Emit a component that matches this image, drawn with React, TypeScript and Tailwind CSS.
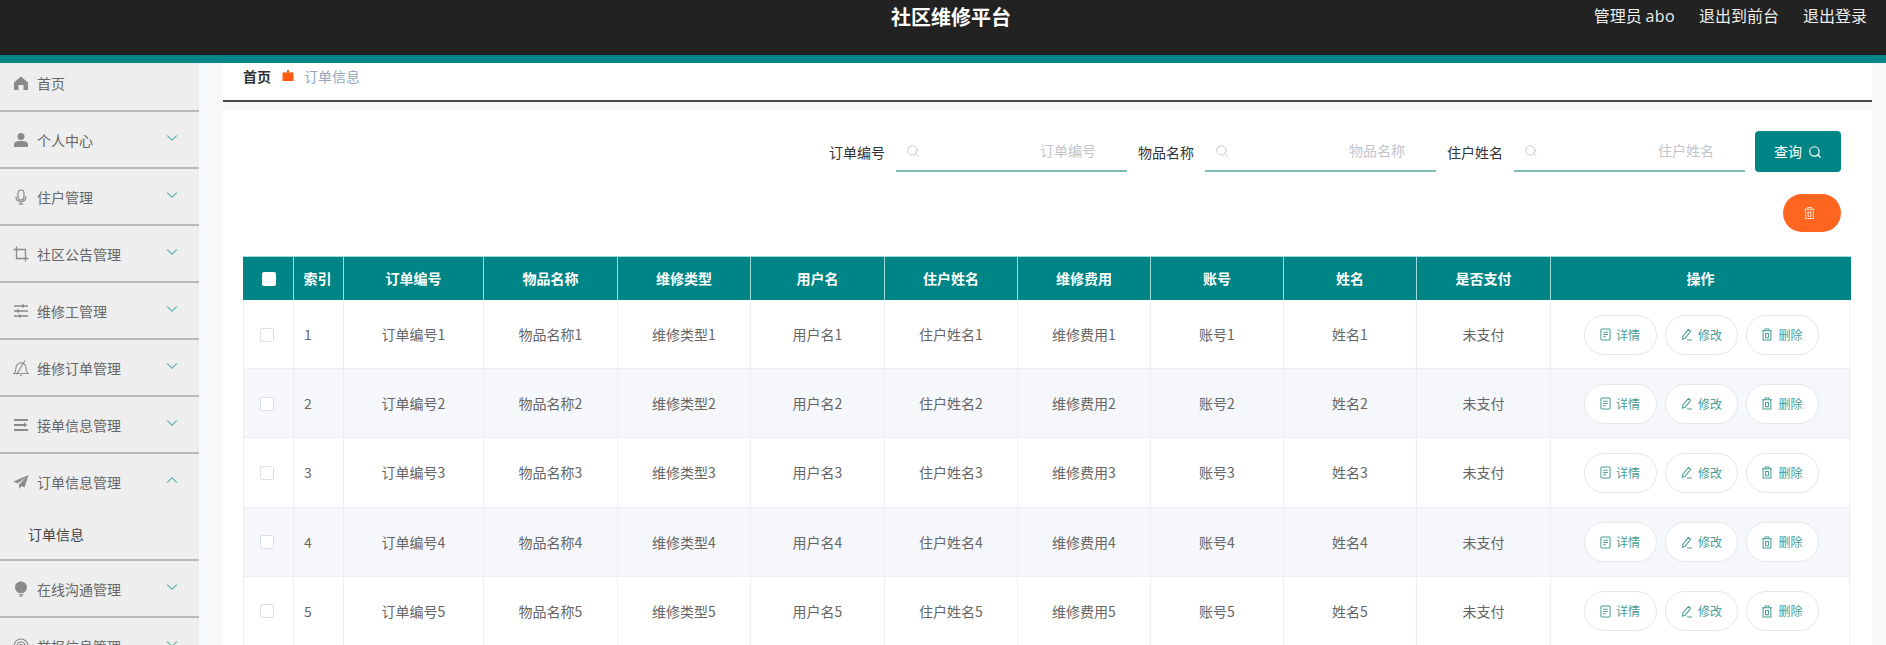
import { ChevronDown, ChevronUp, Search } from "lucide-react";

const FONT = "font-['Noto_Sans_CJK_SC','Liberation_Sans',sans-serif]";

function MenuIcon({ name }: { name: string }) {
  const c = "h-[16px] w-[16px] shrink-0 text-[#8a8a8a]";
  if (name === "home")
    return (
      <svg viewBox="0 0 16 16" className={c} fill="currentColor">
        <path d="M8 1.500 1 7.500v7.500h4.500v-5h5v5H15V7.500z" />
      </svg>
    );
  if (name === "user")
    return (
      <svg viewBox="0 0 16 16" className={c} fill="currentColor">
        <circle cx="8" cy="4.500" r="3.500" />
        <path d="M1 15v-2.500C1 10 3.500 9 8 9s7 1 7 3.500V15z" />
      </svg>
    );
  if (name === "mic")
    return (
      <svg viewBox="0 0 16 16" className={c} fill="none" stroke="currentColor" strokeWidth="1.200">
        <rect x="5" y="1" width="6" height="10" rx="3" />
        <path d="M3 7.500c0 3.200 2 5 5 5s5-1.800 5-5M8 12.500V15M5.500 15h5" />
      </svg>
    );
  if (name === "crop")
    return (
      <svg viewBox="0 0 16 16" className={c} fill="none" stroke="currentColor" strokeWidth="1.300">
        <path d="M3.500 0.500v12h12M0.500 3.500h12v12" />
      </svg>
    );
  if (name === "sliders")
    return (
      <svg viewBox="0 0 16 16" className={c} fill="none" stroke="currentColor" strokeWidth="1.300">
        <path d="M1 3h14M1 8h14M1 13h14" />
        <path d="M10 1.500v3M5 6.500v3M7 11.500v3" strokeWidth="2" />
      </svg>
    );
  if (name === "bell")
    return (
      <svg viewBox="0 0 16 16" className={c} fill="none" stroke="currentColor" strokeWidth="1.100">
        <path d="M1 13.500h14c-1.500-1.500-2-3-2-6 0-2.500-2-4.500-5-4.500S3 5 3 7.500c0 3-.5 4.500-2 6zM8 3V1.500M7 15.500h2M12 .5 3.500 14.500" />
      </svg>
    );
  if (name === "lines")
    return (
      <svg viewBox="0 0 16 16" className={c} fill="currentColor">
        <path d="M1 2h14v2H1zM1 7h10V5.500l3.500 2.400L11 10.300V9H1zM1 12h14v2H1z" />
      </svg>
    );
  if (name === "send")
    return (
      <svg viewBox="0 0 16 16" className={c} fill="currentColor">
        <path d="M15.500 1 .5 7.500l4 2L13 3.500l-7 7V15l2.500-3 3 1.500z" />
      </svg>
    );
  if (name === "bulb")
    return (
      <svg viewBox="0 0 16 16" className={c} fill="currentColor">
        <path d="M8 .5c3.500 0 6 2.500 6 5.800 0 2.700-1.700 4.500-3.500 5.700h-5C3.700 10.800 2 9 2 6.300 2 3 4.500.5 8 .5zM5.800 13h4.400v1.200H5.800zM6.500 14.800h3v.9h-3z" />
      </svg>
    );
  return (
    <svg viewBox="0 0 16 16" className={c} fill="none" stroke="currentColor" strokeWidth="1.200">
      <circle cx="8" cy="8" r="7" />
      <circle cx="8" cy="8" r="4" />
      <circle cx="8" cy="8" r="1.500" fill="currentColor" />
    </svg>
  );
}

function DocIcon() {
  return (
    <svg viewBox="0 0 12 14" className="h-[13px] w-[11px]" fill="none" stroke="currentColor" strokeWidth="1.100">
      <rect x="1" y="1" width="10" height="12" rx="1" />
      <path d="M3.500 4.500h5M3.500 7h5M3.500 9.500h3" />
    </svg>
  );
}

function PenIcon() {
  return (
    <svg viewBox="0 0 14 14" className="h-[13px] w-[13px]" fill="none" stroke="currentColor" strokeWidth="1.100">
      <path d="M9 1.500 11.500 3.500 5.500 11 2.500 12l.5-3zM7.500 12.800H13" />
    </svg>
  );
}

function BinIcon({ className = "h-[13px] w-[12px]" }: { className?: string }) {
  return (
    <svg viewBox="0 0 12 14" className={className} fill="none" stroke="currentColor" strokeWidth="1.100">
      <path d="M.5 3h11M4 3V1h4v2M1.800 3v10h8.400V3M4.500 6h3v4.500h-3z" />
    </svg>
  );
}

const menus = [
  { icon: "user", label: "个人中心" },
  { icon: "mic", label: "住户管理" },
  { icon: "crop", label: "社区公告管理" },
  { icon: "sliders", label: "维修工管理" },
  { icon: "bell", label: "维修订单管理" },
  { icon: "lines", label: "接单信息管理" },
];

function MenuRow({ icon, label, open }: { icon: string; label: string; open?: boolean }) {
  return (
    <div className="flex h-[55px] items-center pl-[13px] pr-[18px] text-[14px] text-[#666]">
      <MenuIcon name={icon} />
      <span className="ml-[8px] flex-1 leading-none">{label}</span>
      {open ? (
        <ChevronUp className="mb-[4px] h-[18px] w-[18px] text-[#6fb8b0]" strokeWidth={1.500} />
      ) : (
        <ChevronDown className="mb-[4px] h-[18px] w-[18px] text-[#6fb8b0]" strokeWidth={1.500} />
      )}
    </div>
  );
}

function Sidebar() {
  return (
    <aside className="w-[199px] shrink-0 bg-[#eeeeee]">
      <div className="flex h-[49px] items-center border-b-2 border-[#b4bbb9] pb-[8px] pl-[13px] text-[14px] text-[#666]">
        <MenuIcon name="home" />
        <span className="ml-[8px] leading-none">首页</span>
      </div>
      {menus.map((m) => (
        <div key={m.label} className="border-b-2 border-[#b4bbb9]">
          <MenuRow icon={m.icon} label={m.label} />
        </div>
      ))}
      <div className="border-b-2 border-[#b4bbb9]">
        <MenuRow icon="send" label="订单信息管理" open />
        <div className="flex h-[50px] items-center pl-[28px] text-[14px] text-[#444]">订单信息</div>
      </div>
      <div className="border-b-2 border-[#b4bbb9]">
        <MenuRow icon="bulb" label="在线沟通管理" />
      </div>
      <div className="border-b-2 border-[#b4bbb9]">
        <MenuRow icon="target" label="举报信息管理" />
      </div>
    </aside>
  );
}

function SearchField({ label }: { label: string }) {
  return (
    <div className="flex items-center">
      <span className="mr-[11px] pt-[2px] text-[14px] text-[#333]">{label}</span>
      <div className="flex h-[41px] w-[231px] items-center justify-between border-b-2 border-[#7fbdb7] pl-[10px] pr-[31px] text-[14px] text-[#c0c4cc]">
        <Search className="h-[14px] w-[14px] text-[#c0c4cc]" strokeWidth={1.500} />
        <span>{label}</span>
      </div>
    </div>
  );
}

const widths = [
  "w-[51px]",
  "w-[50px]",
  "w-[140px]",
  "w-[134px]",
  "w-[133px]",
  "w-[134px]",
  "w-[133px]",
  "w-[133px]",
  "w-[133px]",
  "w-[133px]",
  "w-[134px]",
  "w-[299px]",
];
const heads = ["索引", "订单编号", "物品名称", "维修类型", "用户名", "住户姓名", "维修费用", "账号", "姓名", "是否支付"];

function ActionButton({ icon, label }: { icon: React.ReactNode; label: string }) {
  return (
    <button className="flex h-[40px] w-[73px] items-center justify-center gap-[5px] rounded-full border border-[#e4e7ed] bg-white text-[12px] text-[#4a9d97]">
      {icon}
      {label}
    </button>
  );
}

function Row({ n }: { n: number }) {
  const bg = n % 2 === 0 ? "bg-[#f5f7fa]" : "bg-white";
  const cell = "flex items-center justify-center border-r border-[#ebeef5] pt-[1px] text-[14px] text-[#666]";
  const vals = ["订单编号", "物品名称", "维修类型", "用户名", "住户姓名", "维修费用", "账号", "姓名"];
  return (
    <div className={`flex h-[69.200px] border-b border-[#ebeef5] ${bg}`}>
      <div className={`${cell} ${widths[0]} border-l`}>
        <span className="mr-[3px] h-[14px] w-[14px] rounded-[2px] border border-[#dcdfe6] bg-white" />
      </div>
      <div className={`${cell} ${widths[1]} !justify-start pl-[10px]`}>{n}</div>
      {vals.map((v, i) => (
        <div key={v} className={`${cell} ${widths[i + 2]}`}>
          {v}
          {n}
        </div>
      ))}
      <div className={`${cell} ${widths[10]}`}>未支付</div>
      <div className={`${cell} ${widths[11]} gap-[8px] pl-[2px]`}>
        <ActionButton icon={<DocIcon />} label="详情" />
        <ActionButton icon={<PenIcon />} label="修改" />
        <ActionButton icon={<BinIcon />} label="删除" />
      </div>
    </div>
  );
}

export default function App() {
  return (
    <div className={`flex h-screen flex-col overflow-hidden bg-[#f6f8f9] ${FONT}`}>
      <header className="relative flex h-[63px] shrink-0 border-b-[8px] border-[#008587] bg-[#222222] text-white">
        <div className="flex-1 pl-[16px] pt-[2px] text-center text-[20px] font-bold">社区维修平台</div>
        <div className="absolute right-[19px] top-[3px] flex gap-[24px] text-[16px] text-[#eeeeee]">
          <span>
            管理员 <span className="font-['Open_Sans'] tracking-[0.4px]">abo</span>
          </span>
          <span>退出到前台</span>
          <span>退出登录</span>
        </div>
      </header>
      <div className="flex min-h-0 flex-1">
        <Sidebar />
        <main className="ml-[24px] w-[1649px] shrink-0">
          <div className="flex h-[39px] items-center border-b-2 border-[#444] bg-white pb-[11px] pl-[20px] text-[14px]">
            <span className="font-bold text-[#303133]">首页</span>
            <svg viewBox="0 0 12 12" className="ml-[11px] mr-[10px] h-[12px] w-[12px] text-[#ff5a12]" fill="currentColor">
              <path d="M5 0h2v2.500h2.500L10 2l1.500 1v8h-11V3L2 2l.5.500H5z" />
            </svg>
            <span className="text-[#97a8be]">订单信息</span>
          </div>
          <div className="mt-[9px] h-[600px] bg-white pl-[20px] pt-[20px]">
            <div className="flex justify-end gap-[11px] pr-[31px]">
              <SearchField label="订单编号" />
              <SearchField label="物品名称" />
              <SearchField label="住户姓名" />
              <button className="-ml-px flex h-[41px] w-[86px] items-center justify-center gap-[6px] rounded-[4px] bg-[#008587] text-[14px] text-white">
                查询
                <Search className="h-[14px] w-[14px]" />
              </button>
            </div>
            <div className="mt-[22px] flex justify-end pr-[31px]">
              <button className="flex h-[38px] w-[58px] items-center justify-center rounded-full bg-[#ff6420] pr-[5px] text-[#ffe0cc]">
                <BinIcon className="h-[14px] w-[11px]" />
              </button>
            </div>
            <div className="mt-[24px] w-[1608px]">
              <div className="flex h-[44px] border-t border-[#9fdcdc] bg-[#008587] text-[14px] font-bold text-white">
                <div className={`flex items-center justify-center border-r border-[#9fdcdc] pl-[2px] ${widths[0]}`}>
                  <span className="h-[14px] w-[14px] rounded-[2px] bg-white" />
                </div>
                {heads.map((h, i) => (
                  <div
                    key={h}
                    className={`flex items-center justify-center border-r border-[#9fdcdc] ${widths[i + 1]} ${i === 0 ? "pr-[2px]" : ""}`}
                  >
                    {h}
                  </div>
                ))}
                <div className={`flex items-center justify-center ${widths[11]}`}>操作</div>
              </div>
              {[1, 2, 3, 4, 5].map((n) => (
                <Row key={n} n={n} />
              ))}
            </div>
          </div>
        </main>
      </div>
    </div>
  );
}
